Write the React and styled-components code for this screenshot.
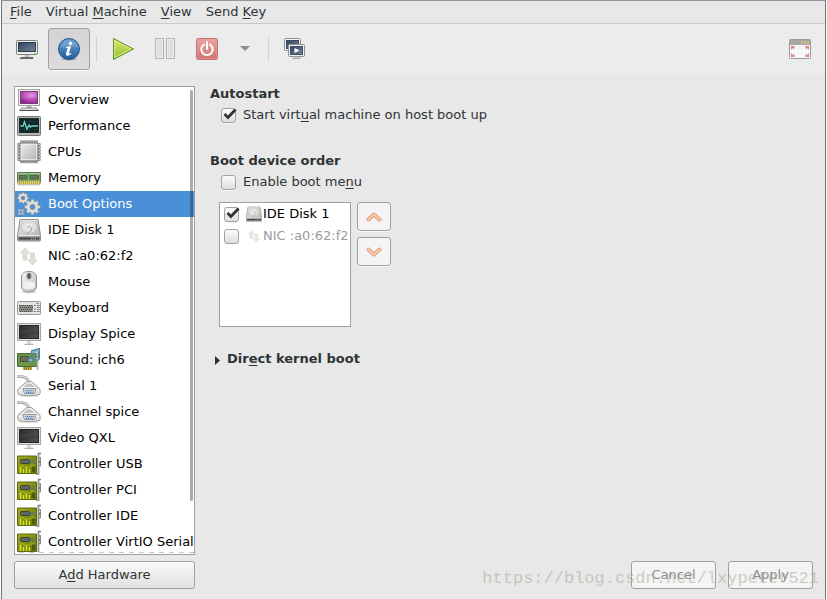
import React, { useState } from "react";
import styled, { createGlobalStyle } from "styled-components";

const GlobalStyle = createGlobalStyle`
  *, *::before, *::after { box-sizing: border-box; }
  body { margin: 0; background: #fafafa; overflow: hidden; }
  body, button, input { font-family: "DejaVu Sans", sans-serif; font-size: 13px; line-height: 16px; color: #2e3436; }
  button { margin: 0; padding: 0; border: 0; background: none; }
  u { text-underline-offset: 2px; text-decoration-thickness: 1px; }
`;

/* ---------- layout ---------- */

const Window = styled.div`
  display: flex;
  flex-direction: column;
  height: 100vh;
  margin: 0 1px;
  border: 1px solid #6f757b;
  border-top-color: #929597;
  border-bottom: 0;
  background: #e8e8e8;
`;

const MenuBar = styled.nav`
  display: flex;
  align-items: center;
  height: 23px;
  padding-left: 1px;
  border-bottom: 1px solid #c9c9c9;
`;

const MenuItem = styled.button`
  height: 22px;
  padding: 0 7px;
`;

const Toolbar = styled.div`
  display: flex;
  align-items: center;
  padding: 4px;
  background: #ececec;
`;

const ToolButton = styled.button`
  display: flex;
  align-items: center;
  justify-content: center;
  width: ${(p) => (p.$narrow ? 34 : 42)}px;
  height: 42px;
  border: 1px solid ${(p) => (p.$active ? "#a0a0a0" : "transparent")};
  border-radius: 3px;
  background: ${(p) => (p.$active ? "linear-gradient(#d3d3d3, #dcdcdc)" : "none")};
  box-shadow: ${(p) => (p.$active ? "0 1px 0 #fafafa" : "none")};
`;

const Separator = styled.div`
  width: 1px;
  height: 26px;
  margin: 0 5px 0 6px;
  background: #d2d2d2;
`;

const Spacer = styled.div`
  flex: 1;
`;

const Body = styled.div`
  display: flex;
  flex: 1;
  min-height: 0;
  gap: 15px;
  padding: 12px 12px 10px;
`;

const Sidebar = styled.aside`
  display: flex;
  flex-direction: column;
  flex: 0 0 181px;
  min-width: 0;
  gap: 6px;
`;

const ListFrame = styled.div`
  position: relative;
  flex: 1;
  min-height: 0;
  overflow: hidden;
  border: 1px solid #a0a0a0;
  background: #fff;
  &::after {
    content: "";
    position: absolute;
    left: 4px;
    right: 0;
    bottom: 1px;
    height: 1px;
    background: repeating-linear-gradient(90deg, #c4c4c4 0 5px, #fff 5px 10px);
  }
`;

const ScrollThumb = styled.div`
  position: absolute;
  top: 3px;
  right: 1px;
  width: 3px;
  height: 88%;
  border-radius: 2px;
  background: #2e3a3a;
  opacity: 0.42;
`;

const HardwareItems = styled.ul`
  margin: 0;
  padding: 0;
  list-style: none;
`;

const HardwareButton = styled.button`
  display: flex;
  align-items: center;
  gap: 7px;
  width: 100%;
  height: 26px;
  padding: 0 2px;
  white-space: nowrap;
  text-align: left;
  color: ${(p) => (p.$selected ? "#fff" : "#000")};
  background: ${(p) => (p.$selected ? "#4a90d9" : "none")};
  svg {
    flex: none;
  }
`;

const PushButton = styled.button`
  min-width: 85px;
  height: 28px;
  border: 1px solid #a0a0a0;
  border-radius: 3px;
  color: #2e3436;
  background: linear-gradient(#fafafa, #e0e0e0);
  &:disabled {
    color: #8b8e8f;
    background: #f4f4f4;
  }
`;

const Details = styled.main`
  display: flex;
  flex-direction: column;
  flex: 1;
  min-width: 0;
`;

const Section = styled.section`
  display: flex;
  flex-direction: column;
  margin-bottom: ${(p) => (p.$last ? 24 : 27)}px;
`;

const Heading = styled.h2`
  margin: 0;
  font-size: 13px;
  line-height: 16px;
  font-weight: bold;
`;

const CheckLabel = styled.label`
  display: flex;
  align-items: center;
  gap: 7px;
  height: 22px;
  margin: 2px 0 0 11px;
`;

const CheckBox = styled.span`
  position: relative;
  display: flex;
  flex: none;
  width: 15px;
  height: 15px;
  border: 1px solid #a2a2a2;
  border-radius: 3px;
  background: linear-gradient(#fcfcfc, #dedede);
  box-shadow: 0 1px 0 #f8f8f8;
  input {
    appearance: none;
    width: 13px;
    height: 13px;
    margin: 0;
  }
  svg {
    position: absolute;
    top: -1px;
    left: 1px;
    pointer-events: none;
    visibility: hidden;
  }
  input:checked + svg {
    visibility: visible;
  }
`;

const OrderArea = styled.div`
  display: flex;
  gap: 6px;
  margin: 9px 0 0 9px;
`;

const DeviceList = styled.ul`
  width: 132px;
  height: 125px;
  margin: 0;
  padding: 0;
  border: 1px solid #a0a0a0;
  background: #fff;
  list-style: none;
`;

const DeviceRow = styled.label`
  display: flex;
  align-items: center;
  height: 22px;
  padding-left: 4px;
  white-space: nowrap;
  color: ${(p) => (p.$muted ? "#9a9c9c" : "#000")};
  > svg {
    flex: none;
    margin: 0 1px 0 7px;
    opacity: ${(p) => (p.$muted ? 0.75 : 1)};
  }
`;

const MoveButtons = styled.div`
  display: flex;
  flex-direction: column;
  gap: 6px;
`;

const MoveButton = styled.button`
  display: flex;
  align-items: center;
  justify-content: center;
  width: 34px;
  height: 29px;
  border: 1px solid #a0a0a0;
  border-radius: 3px;
  background: #f4f4f4;
  box-shadow: 0 1px 0 #f8f8f8;
`;

const Expander = styled.button`
  display: flex;
  align-items: center;
  gap: 6px;
  margin-left: 5px;
  font-weight: bold;
  align-self: flex-start;
`;

const Actions = styled.div`
  position: relative;
  display: flex;
  justify-content: flex-end;
  gap: 12px;
  margin-top: auto;
`;

const Watermark = styled.span`
  position: absolute;
  right: -6px;
  bottom: 0;
  font-family: "Liberation Mono", monospace;
  font-size: 17px;
  line-height: 20px;
  color: #999980;
  opacity: 0.42;
  white-space: nowrap;
  pointer-events: none;
`;

/* ---------- icons ---------- */

const Gradient = ({ id, from, to, diagonal }) => (
  <linearGradient id={id} x1="0" y1="0" x2={diagonal ? 1 : 0} y2="1">
    <stop offset="0" stopColor={from} />
    <stop offset="1" stopColor={to} />
  </linearGradient>
);

const HiddenSvg = styled.svg`
  position: absolute;
`;

const IconDefs = () => (
  <HiddenSvg width="0" height="0" aria-hidden="true">
    <defs>
      <radialGradient id="purple" cx=".65" cy=".35" r=".75">
        <stop offset="0" stopColor="#dd87dc" />
        <stop offset=".55" stopColor="#b644b4" />
        <stop offset="1" stopColor="#84217f" />
      </radialGradient>
      <Gradient id="silver" from="#fafafa" to="#b5b7b3" diagonal />
      <Gradient id="metal" from="#e4e4e2" to="#b2b4b0" diagonal />
      <Gradient id="screen" from="#33465e" to="#71819a" diagonal />
      <Gradient id="black" from="#191919" to="#555" diagonal />
      <Gradient id="blue" from="#6ba1d4" to="#225c9b" />
      <Gradient id="play" from="#dcec6c" to="#94b82b" />
      <Gradient id="power" from="#e9a5a0" to="#cf7274" />
      <Gradient id="card" from="#a3ad1c" to="#626c08" diagonal />
    </defs>
  </HiddenSvg>
);

const Icon = ({ size = 24, box = 24, children }) => (
  <svg width={size} height={size} viewBox={`0 0 ${box} ${box}`} fill="none" aria-hidden="true">
    {children}
  </svg>
);

const OverviewIcon = () => (
  <Icon>
    <rect x="1.5" y="1.5" width="21" height="16" fill="#eee" stroke="#a5a5a3" />
    <rect x="3.5" y="3.5" width="17" height="12" fill="url(#purple)" stroke="#7a3c77" />
    <path d="M4 4h16v5c-6 0-10 2-16 2z" fill="#fff" opacity=".13" />
    <path d="M10 18h4l1 2H9z" fill="#aaa" />
    <path d="M4.5 20h15l2 2.500h-19z" fill="#ddd" stroke="#8a8a8a" />
    <path d="M3 22.500h18" stroke="#4c4c4c" />
  </Icon>
);

const PerformanceIcon = () => (
  <Icon>
    <rect x=".5" y="2.5" width="23" height="19" rx="1" fill="#b4b6b2" stroke="#777975" />
    <rect x="2.500" y="4.500" width="19" height="14" fill="#0f2427" stroke="#1a2c2c" />
    <path d="M3 7.500h18M3 11.500h18M3 15.500h18M7.500 5v13M12.500 5v13M17.500 5v13" stroke="#1f4040" strokeWidth=".6" />
    <path d="M3.500 12h2.500l1.500-4 2.500 7 2-4 1.500 2 1.500-1h6" stroke="#6ed9c0" strokeWidth="1.300" />
  </Icon>
);

const legs = [4, 7, 10, 13, 16, 19];

const CpuIcon = () => (
  <Icon>
    {legs.map((n) => (
      <g key={n} fill="#c8cac6" stroke="#6d706b" strokeWidth=".8">
        <rect x={n - 0.500} y=".5" width="2" height="3.500" rx=".8" />
        <rect x={n - 0.500} y="20" width="2" height="3" rx=".8" />
        <rect x=".5" y={n - 0.500} width="3.500" height="2" rx=".8" />
        <rect x="20" y={n - 0.500} width="3.500" height="2" rx=".8" />
      </g>
    ))}
    <rect x="3" y="3" width="18" height="18" rx="1" fill="url(#silver)" stroke="#7f817d" />
    <rect x="4.500" y="4.500" width="15" height="15" fill="url(#metal)" stroke="#f0f0ee" opacity=".7" />
  </Icon>
);

const MemoryIcon = () => (
  <Icon>
    <path d="M.5 6.500h23v10H.5z" fill="#7fa86f" stroke="#5f7a55" />
    <path d="M1 7.500h22" stroke="#a7bf9b" />
    <path d="M2 9h8.500v4.500H2zM12.500 9H22v4.500h-9.500z" fill="#52664c" />
    <path d="M3 11h6.500M13.500 11H21" stroke="#75886e" />
    <path d="M11.500 7v8" stroke="#2dc63e" />
    <path d="M.5 16.500h23" stroke="#9a924a" strokeWidth="4" />
    <path d="M1 16.500h22" stroke="#e3d36a" strokeWidth="3" strokeDasharray="1.300 .7" />
    <path d="M1 19h22" stroke="#b5b5ac" opacity=".6" />
  </Icon>
);

const Gear = ({ cx, cy, r, teeth }) => (
  <g transform={`translate(${cx} ${cy})`}>
    {Array.from({ length: teeth }, (_, i) => (
      <rect
        key={i}
        x={-r * 0.23}
        y={-r * 1.2}
        width={r * 0.46}
        height={r * 0.7}
        transform={`rotate(${(360 / teeth) * i})`}
        fill="#e2e2df"
        stroke="#92938f"
        strokeWidth=".7"
      />
    ))}
    <circle r={r * 0.66} stroke="#dededb" strokeWidth={r * 0.5} />
    <circle r={r * 0.38} fill="#4a90d9" stroke="#8b8d89" strokeWidth=".8" />
  </g>
);

const GearsIcon = () => (
  <Icon>
    <Gear cx={6} cy={6} r={4.6} teeth={8} />
    <Gear cx={15.5} cy={15} r={6.4} teeth={8} />
    <path d="M1 17l2 1h2l2-1-1 2v2l1 2-2-1H3l-2 1 1-2v-2z" fill="#dadad5" stroke="#aaa99f" />
    <path d="M3 19h2v2H3z" fill="#4a90d9" />
  </Icon>
);

const DiskIcon = ({ size }) => (
  <Icon size={size}>
    <path d="M3 1.500h18l2.500 16v4.500q0 1-1 1h-21q-1 0-1-1v-4.500z" fill="url(#metal)" stroke="#8e908c" />
    <path d="M1 18.500h22v4H1z" fill="#8a8c88" />
    <path d="M2 20.500h20" stroke="#464846" strokeWidth="2" strokeDasharray="12 1 1 1 1 1" />
    <ellipse cx="12" cy="9" rx="8" ry="6.500" fill="#e1e2df" stroke="#c0c2be" />
    <ellipse cx="12" cy="9" rx="3" ry="2.500" fill="#d2d3cf" stroke="#f7f7f7" />
    <path d="M9 16l5-3 1-4" stroke="#a3a5a0" />
    <path d="M3.500 2.500h17M1.500 17.500h21" stroke="#f2f2f2" opacity=".7" />
  </Icon>
);

const NetworkIcon = ({ size }) => (
  <Icon size={size}>
    <path d="M8 4l4.500 5H10v7H6V9H3.500z" fill="#e2dfd6" stroke="#d2cec3" strokeWidth=".7" />
    <path d="M15.500 21l4.500-5h-2.500V9h-4v7H11z" fill="#e2dfd6" stroke="#d2cec3" strokeWidth=".7" />
  </Icon>
);

const MouseIcon = () => (
  <Icon>
    <ellipse cx="12" cy="22" rx="8" ry="1.500" fill="#ddd" />
    <path d="M12 1.500c5 0 7 2 7.500 5.500v9c0 4-3 6-7.500 6s-7.500-2-7.500-6V7C5 3.500 7 1.500 12 1.500z" fill="url(#silver)" stroke="#8d8f8b" />
    <path d="M6 13c3-2 9-2 12 0v4c-1 3-11 3-12 0z" fill="#f1f1ef" />
    <rect x="10" y="3" width="4" height="6" rx="2" fill="#595b5b" stroke="#939593" />
  </Icon>
);

const KeyboardIcon = () => (
  <Icon>
    <rect x=".5" y="5.500" width="23" height="13" rx="1" fill="#e5e5e3" stroke="#979995" />
    <path d="M2 9h14v7H2z" fill="#8b8d89" />
    <path d="M2 9.500h14M3 11.500h13M2 13.500h14M3 15.500h12" stroke="#4a4c49" strokeDasharray="1 1" />
    <path d="M17 9.500h2M17 13h2M17 15.500h2M20 9.500h3M20 11.500h3M20 13.500h3M20 15.500h3" stroke="#60625e" strokeDasharray="1 .4" strokeWidth="1.200" />
    <path d="M19 7.500h3" stroke="#5dae58" />
  </Icon>
);

const DisplayIcon = () => (
  <Icon>
    <rect x=".5" y="1.500" width="23" height="17" fill="#dedfdf" stroke="#a4a6a4" />
    <rect x="2.500" y="3.500" width="19" height="13" fill="url(#black)" stroke="#262626" />
    <path d="M3 4h18v5c-6 0-11 3-18 3z" fill="#fff" opacity=".07" />
    <path d="M10 19h4v2l3 1v1H7v-1l3-1z" fill="#d5d7d5" />
    <path d="M8 22.500h8" stroke="#b0b2b0" />
  </Icon>
);

const SoundIcon = () => (
  <Icon>
    <path d="M.5 5.500h19v13H.5z" fill="#6a9447" stroke="#4a6b35" />
    <path d="M3.500 8.500h8v5h-8z" fill="#6d6c55" stroke="#4a5838" />
    <path d="M2 16h12" stroke="#89ae5b" strokeDasharray="1 1" />
    <path d="M6 19h9v3H6z" fill="#c7a72e" />
    <path d="M7.500 19v3m2-3v3m2-3v3m2-3v3" stroke="#8f7c2a" />
    <path d="M20.500 3v19" stroke="#b5b8b4" strokeWidth="2" />
    <path d="M15 12V3l7-2v9" stroke="#4a84a5" strokeWidth="2" />
    <path d="M15 4.500l7-2" stroke="#86b4cf" strokeWidth="2" />
    <ellipse cx="13.500" cy="12" rx="2.300" ry="1.800" fill="#88b4cf" stroke="#4a84a5" />
    <ellipse cx="20.500" cy="10.500" rx="2.200" ry="1.700" fill="#88b4cf" stroke="#4a84a5" />
  </Icon>
);

const SerialIcon = () => (
  <Icon>
    <path d="M0 2.500c7-.5 11 1 12 6" stroke="#9b9d9b" strokeWidth="2.800" />
    <path d="M0 2.200c7-.5 11 1 12 6" stroke="#ddd" strokeWidth="1.200" />
    <path d="M10 7.500h4.500l8 7c1 1 1 5 0 6-6 1.500-15 1.500-21 0-1-1-1-5 0-6z" fill="#e2e2e0" stroke="#9d9f9b" />
    <path d="M10.500 9h3.500l5 4.500H5z" fill="#c2c4c1" stroke="#f5f5f5" />
    <path d="M6 14.500h13l-1.500 5h-10z" fill="#e9e9e7" stroke="#8f969d" />
    <path d="M8 16.500h9M9 18.500h7" stroke="#5b8dc2" strokeWidth="1.500" strokeDasharray="1.500 .5" />
    <path d="M2 16.500h3m15 0h2" stroke="#fff" />
    <path d="M3 22h18" stroke="#999" opacity=".5" />
  </Icon>
);

const ControllerIcon = () => (
  <Icon>
    <path d="M.5 4h19v17.500H.5z" fill="url(#card)" stroke="#606b11" />
    <path d="M3.500 15v6m3-4v4m3-6v6m3-4v4" stroke="#d3e62c" strokeWidth="1.500" />
    <path d="M2 14h5v1h7v-2h4" stroke="#a6b71a" />
    <path d="M15 15h3v5h-3z" fill="#4f5a0a" />
    <rect x="3.500" y="7.500" width="9" height="4" rx="1" fill="#5f6562" stroke="#3b4234" />
    <path d="M13 8.500h4m-4 2h4" stroke="#3f78a4" />
    <path d="M24 1.500h-2.500V22H19M21.500 6H24v3h-2.500M21.500 10.500H24v3h-2.500" stroke="#7b7e7a" strokeWidth="1.600" />
    <path d="M21 2v20" stroke="#b9bbb6" strokeWidth=".8" />
  </Icon>
);

const Monitor = ({ play }) => (
  <>
    <rect x=".5" y=".5" width="16" height="12" rx="1" fill="#f3f3f1" stroke="#8f918c" />
    <rect x="2.500" y="2.500" width="12" height="8" fill="url(#screen)" stroke="#3b4b62" />
    {play && <path d="M6.500 4l5 2.500-5 2.500z" fill="#fff" />}
    <path d="M6 13h5v1.500H4.500h8" stroke="#a9aba7" />
  </>
);

const ConsoleIcon = () => (
  <Icon size={22} box={22}>
    <rect x=".5" y="2.500" width="21" height="14" rx="1" fill="#eeeeec" stroke="#7d7f7b" />
    <rect x="2.500" y="4.500" width="17" height="9" fill="url(#screen)" stroke="#2d3c50" />
    <path d="M18 15.500h1.500" stroke="#8dc54c" />
    <path d="M9 17h4v2H9z" fill="#b9bbb7" />
    <path d="M5 19.500h12v1H4z" fill="#ddd" stroke="#666864" />
  </Icon>
);

const InfoIcon = () => (
  <Icon>
    <ellipse cx="12" cy="22" rx="8" ry="1.500" fill="#aaa" />
    <circle cx="12" cy="12" r="10.500" fill="url(#blue)" stroke="#25578f" />
    <path d="M3 11c1-10 17-10 18 0-5-2-11 0-18 0z" fill="#fff" opacity=".14" />
    <circle cx="13.500" cy="6.500" r="1.700" fill="#fff" />
    <path d="M9 10.500c2-1 3-1.200 5-1.200l-2 7c0 .8 1 .4 2-.5l.5.700c-2 2.500-6 3.200-5.500.3l1.700-5.800H9z" fill="#fff" />
  </Icon>
);

const PlayIcon = () => (
  <Icon>
    <path d="M2.500 1.500v21l20-10.500z" fill="url(#play)" stroke="#57912c" strokeLinejoin="round" />
    <path d="M3.700 3.500v17l16.500-8.500z" stroke="#e1ed94" opacity=".8" />
  </Icon>
);

const PauseIcon = () => (
  <Icon size={22} box={22}>
    {[1.5, 12.5].map((x) => (
      <g key={x}>
        <rect x={x} y=".5" width="8" height="20" fill="#dfe0de" stroke="#b4b5b3" />
        <rect x={x + 1} y="1.500" width="6" height="18" stroke="#f0f0f0" opacity=".8" />
      </g>
    ))}
  </Icon>
);

const PowerIcon = () => (
  <Icon size={22} box={22}>
    <rect x=".5" y=".5" width="21" height="21" rx="2" fill="url(#power)" stroke="#c66f72" />
    <rect x="1.500" y="1.500" width="19" height="19" rx="1" stroke="#ed9d97" opacity=".6" />
    <path d="M8 6.500a5.700 5.700 0 1 0 6 0M11 4v7" stroke="#fff" strokeWidth="2" strokeLinecap="round" />
  </Icon>
);

const DropIcon = () => (
  <Icon size={10} box={10}>
    <path d="M0 2h10L5 7z" fill="#8b8e8f" />
  </Icon>
);

const SnapshotsIcon = () => (
  <Icon size={22} box={22}>
    <Monitor />
    <g transform="translate(4 6)"><Monitor play /></g>
  </Icon>
);

const FullscreenIcon = () => (
  <Icon size={22} box={22}>
    <rect x=".5" y="1.500" width="21" height="19" rx="1" fill="#f6f6f6" stroke="#999b99" />
    <path d="M1 2h20v5H1z" fill="#a7a9a7" />
    <path d="M12 4.500h8" stroke="#e2c078" strokeWidth="2" strokeDasharray="2 1" />
    <g fill="#dd8585">
      <path d="M2 8h4L5 9l1 1-1 1-1-1-2 2zM20 8h-4l1 1-1 1 1 1 1-1 2 2zM2 19h4l-1-1 1-1-1-1-1 1-2-2zM20 19h-4l1-1-1-1 1-1 1 1 2-2z" />
    </g>
  </Icon>
);

const Chevron = ({ down }) => (
  <Icon size={16} box={16}>
    <g transform={down ? "rotate(180 8 8)" : undefined}>
      <path d="M2.500 10.500L8 5.500l5.500 5" stroke="#e59d80" strokeWidth="4" strokeLinecap="round" strokeLinejoin="round" />
      <path d="M2.500 10.500L8 5.500l5.500 5" stroke="#f6c8ac" strokeWidth="2.200" strokeLinecap="round" strokeLinejoin="round" />
    </g>
  </Icon>
);

const ExpandIcon = () => (
  <svg width="6" height="12" viewBox="0 0 6 12" aria-hidden="true">
    <path d="M0 3v9l5-4.500z" fill="#2e3436" />
  </svg>
);

const CheckMark = () => (
  <svg width="15" height="13" viewBox="0 0 15 13" fill="none" aria-hidden="true">
    <path d="M1.500 6l3.500 3.500L12.500 1.500" stroke="#2e3436" strokeWidth="2.800" />
  </svg>
);

/* ---------- application ---------- */

const hardware = [
  ["Overview", OverviewIcon],
  ["Performance", PerformanceIcon],
  ["CPUs", CpuIcon],
  ["Memory", MemoryIcon],
  ["Boot Options", GearsIcon],
  ["IDE Disk 1", DiskIcon],
  ["NIC :a0:62:f2", NetworkIcon],
  ["Mouse", MouseIcon],
  ["Keyboard", KeyboardIcon],
  ["Display Spice", DisplayIcon],
  ["Sound: ich6", SoundIcon],
  ["Serial 1", SerialIcon],
  ["Channel spice", SerialIcon],
  ["Video QXL", DisplayIcon],
  ["Controller USB", ControllerIcon],
  ["Controller PCI", ControllerIcon],
  ["Controller IDE", ControllerIcon],
  ["Controller VirtIO Serial", ControllerIcon],
];

const Check = ({ id, initial = false }) => (
  <CheckBox>
    <input id={id} type="checkbox" defaultChecked={initial} />
    <CheckMark />
  </CheckBox>
);

export default function App() {
  const [selected, setSelected] = useState("Boot Options");
  return (
    <>
      <GlobalStyle />
      <IconDefs />
      <Window>
        <MenuBar>
          <MenuItem><u>F</u>ile</MenuItem>
          <MenuItem>Virtual <u>M</u>achine</MenuItem>
          <MenuItem><u>V</u>iew</MenuItem>
          <MenuItem>Send <u>K</u>ey</MenuItem>
        </MenuBar>
        <Toolbar role="toolbar">
          <ToolButton aria-label="Show the graphical console"><ConsoleIcon /></ToolButton>
          <ToolButton $active aria-label="Show virtual hardware details"><InfoIcon /></ToolButton>
          <Separator />
          <ToolButton aria-label="Run"><PlayIcon /></ToolButton>
          <ToolButton disabled aria-label="Pause"><PauseIcon /></ToolButton>
          <ToolButton disabled aria-label="Shut down"><PowerIcon /></ToolButton>
          <ToolButton $narrow disabled aria-label="Shut down options"><DropIcon /></ToolButton>
          <Separator />
          <ToolButton aria-label="Manage snapshots"><SnapshotsIcon /></ToolButton>
          <Spacer />
          <ToolButton disabled aria-label="Full screen"><FullscreenIcon /></ToolButton>
        </Toolbar>
        <Body>
          <Sidebar>
            <ListFrame>
              <HardwareItems>
                {hardware.map(([name, Glyph]) => (
                  <li key={name}>
                    <HardwareButton $selected={name === selected} onClick={() => setSelected(name)}>
                      <Glyph />
                      {name}
                    </HardwareButton>
                  </li>
                ))}
              </HardwareItems>
              <ScrollThumb />
            </ListFrame>
            <PushButton>A<u>d</u>d Hardware</PushButton>
          </Sidebar>
          <Details>
            <Section>
              <Heading>Autostart</Heading>
              <CheckLabel htmlFor="autostart">
                <Check id="autostart" initial />
                <span>Start virt<u>u</u>al machine on host boot up</span>
              </CheckLabel>
            </Section>
            <Section $last>
              <Heading>Boot device order</Heading>
              <CheckLabel htmlFor="bootmenu">
                <Check id="bootmenu" />
                <span>Enable boot me<u>n</u>u</span>
              </CheckLabel>
              <OrderArea>
                <DeviceList>
                  <li>
                    <DeviceRow htmlFor="disk">
                      <Check id="disk" initial />
                      <DiskIcon size={16} />
                      IDE Disk 1
                    </DeviceRow>
                  </li>
                  <li>
                    <DeviceRow htmlFor="nic" $muted>
                      <Check id="nic" />
                      <NetworkIcon size={16} />
                      NIC :a0:62:f2
                    </DeviceRow>
                  </li>
                </DeviceList>
                <MoveButtons>
                  <MoveButton disabled aria-label="Move up"><Chevron /></MoveButton>
                  <MoveButton disabled aria-label="Move down"><Chevron down /></MoveButton>
                </MoveButtons>
              </OrderArea>
            </Section>
            <Expander aria-expanded="false">
              <ExpandIcon />
              <span>Dir<u>e</u>ct kernel boot</span>
            </Expander>
            <Actions>
              <PushButton disabled>Cancel</PushButton>
              <PushButton disabled>Apply</PushButton>
              <Watermark>https://blog.csdn.net/lxypeter521</Watermark>
            </Actions>
          </Details>
        </Body>
      </Window>
    </>
  );
}
